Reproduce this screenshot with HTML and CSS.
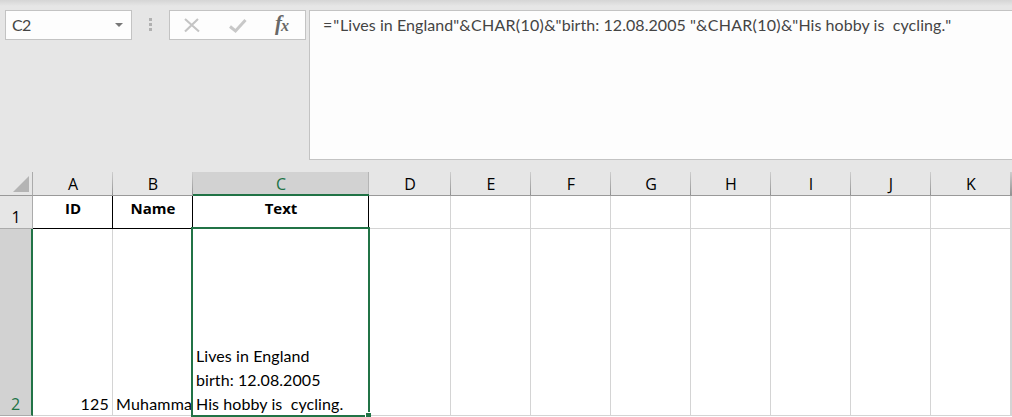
FILE: index.html
```html
<!DOCTYPE html>
<html lang="en">
<head>
<meta charset="utf-8">
<title>Spreadsheet</title>
<link rel="stylesheet" href="styles.css">
</head>
<body>
<div class="app">
  <header class="toolbar">
    <div class="name-box"><span>C2</span><svg width="8" height="4" viewBox="0 0 8 4"><path d="M0 0h8L4 4z" fill="#777"/></svg></div>
    <div class="grip"><i></i><i></i><i></i></div>
    <div class="actions">
      <svg width="135" height="28" viewBox="0 0 135 28">
        <path d="M15 8 29 20.500M28 8 15 20.500" fill="none" stroke="#c4c4c4" stroke-width="2.1"/>
        <path d="M60 15.500 65.500 20 75.500 9" fill="none" stroke="#c8c8c8" stroke-width="3"/>
        <text x="105" y="19" class="fx-f">f</text>
        <text x="111" y="20" class="fx-x">x</text>
      </svg>
    </div>
    <div class="formula"><span class="op lead">="</span>Lives in England<span class="op">"&amp;CHAR(10)&amp;"</span>birth: 12.08.2005 <span class="op">"&amp;CHAR(10)&amp;"</span>His hobby is  cycling.<span class="op">"</span></div>
  </header>
  <main class="sheet">
    <div class="corner"><svg width="16" height="16" viewBox="0 0 16 16"><path d="M16 0v16H0z" fill="#b4b4b4"/></svg></div>
    <div class="col">A</div><div class="col">B</div><div class="col active">C</div><div class="col">D</div><div class="col">E</div><div class="col">F</div><div class="col">G</div><div class="col">H</div><div class="col">I</div><div class="col">J</div><div class="col">K</div><div class="col"></div>
    <div class="row">1</div>
    <div class="cell title">ID</div><div class="cell title">Name</div><div class="cell title">Text</div><div class="cell"></div><div class="cell"></div><div class="cell"></div><div class="cell"></div><div class="cell"></div><div class="cell"></div><div class="cell"></div><div class="cell"></div><div class="cell"></div>
    <div class="row active">2</div>
    <div class="cell number">125</div><div class="cell name">Muhamma</div>
    <div class="cell note"><div class="lines">Lives in England
birth: 12.08.2005
His hobby is  cycling.</div><div class="selection"><b class="handle"></b></div></div>
    <div class="cell"></div><div class="cell"></div><div class="cell"></div><div class="cell"></div><div class="cell"></div><div class="cell"></div><div class="cell"></div><div class="cell"></div><div class="cell"></div>
  </main>
</div>
</body>
</html>
```
FILE: styles.css
```css
* { box-sizing: border-box; }
body { margin: 0; overflow: hidden; background: #fff; }
.app { width: 1012px; height: 417px; overflow: hidden; color: #000; font: 16px/24px Lato, sans-serif; }
.toolbar { display: flex; align-items: flex-start; height: 172px; padding: 10px 0 0 5px; background: linear-gradient(#d5d5d5, #e6e6e6 6px); }
.name-box { display: flex; align-items: center; justify-content: space-between; width: 127px; height: 30px; padding: 0 8px 0 6px; border: 1px solid #c3c3c3; background: #fdfdfd; color: #444; font-size: 16px; letter-spacing: -.6px; }
.grip { display: flex; flex-direction: column; gap: 2px; width: 3px; margin: 8px 16px 0 17px; }
.grip i { width: 3px; height: 3px; background: #b1b1b1; }
.actions { width: 137px; height: 30px; margin-left: 1px; border: 1px solid #c3c3c3; background: #fdfdfd; }
.actions svg { display: block; }
.fx-f { font: italic bold 21px "Liberation Serif", serif; fill: #686868; }
.fx-x { font: italic bold 16px "Liberation Serif", serif; fill: #686868; }
.formula { flex: 1; height: 150px; margin-left: 3px; padding: 2px 0 0 13px; border: 1px solid #c3c3c3; border-right: 0; background: #fdfdfd; color: #444; white-space: pre; font-size: 16px; letter-spacing: .06px; }
.op { letter-spacing: .3px; }
.op.lead { letter-spacing: .9px; }
.sheet { display: grid; grid-template-columns: 33px 80px 80px 176px 82px repeat(7, 80px) 1px; grid-template-rows: 24px 33px 187px 1px; }
.corner, .col { border-bottom: 1px solid #999; background: #e6e6e6; }
.corner { display: flex; justify-content: flex-end; padding: 4px 3px 0 0; border-right: 1px solid #ababab; }
.col { background: linear-gradient(#cecece, #929292) right / 1px 100% no-repeat #e6e6e6; text-align: center; font: 16px/25px "Open Sans", sans-serif; }
.col.active { border-bottom: 2px solid #217346; background: linear-gradient(#b5b5b5, #b5b5b5) right / 1px 100% no-repeat #d2d2d2; color: #217346; }
.row { display: flex; align-items: flex-end; justify-content: center; border-right: 1px solid #ababab; border-bottom: 1px solid #ababab; background: #e6e6e6; font: 16px/22px "Open Sans", sans-serif; }
.row.active { border-right: 2px solid #217346; background: #d2d2d2; color: #217346; }
.cell { border-right: 1px solid #d4d4d4; border-bottom: 1px solid #d4d4d4; min-width: 0; }
.title { padding-left: 1px; border-color: #000; text-align: center; font: bold 15px/25px "Open Sans", sans-serif; }
.number, .name, .note { display: flex; align-items: flex-end; line-height: 24px; }
.number, .name { line-height: 22px; letter-spacing: .2px; }
.number { justify-content: flex-end; padding-right: 3px; }
.name { padding-left: 3px; }
.note { position: relative; padding-left: 3px; }
.lines { margin-bottom: -1px; white-space: pre; letter-spacing: .08px; }
.selection { position: absolute; inset: -2px; border: 2px solid #217346; }
.handle { position: absolute; right: -3px; bottom: -3px; width: 6px; height: 6px; border: 1px solid #fff; border-right: 0; border-bottom: 0; background: #217346; }
```
